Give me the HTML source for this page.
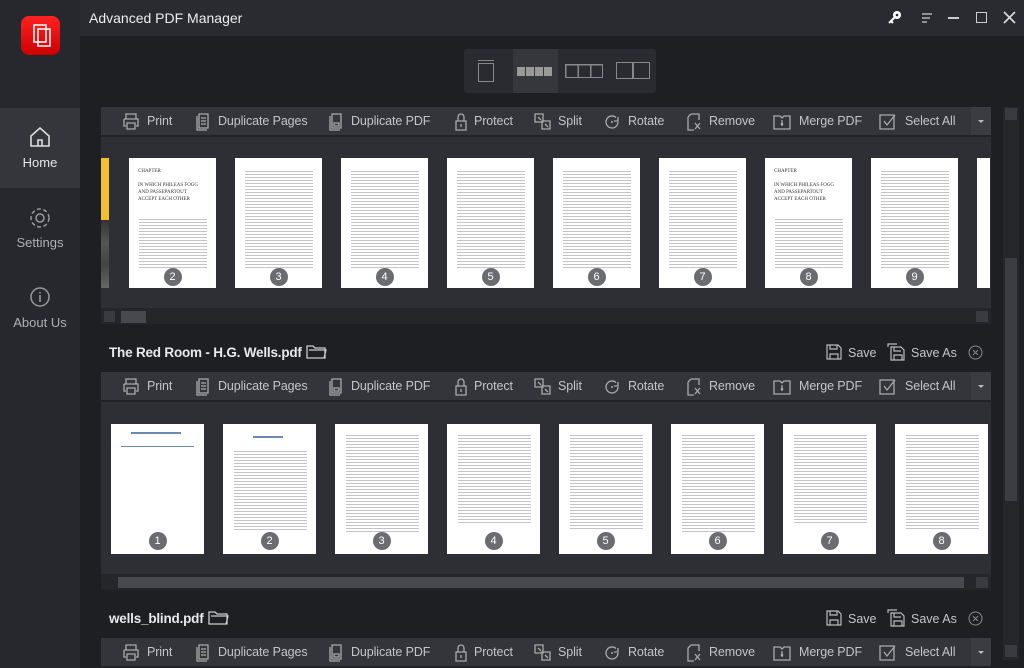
<!DOCTYPE html>
<html><head><meta charset="utf-8"><style>
*{margin:0;padding:0;box-sizing:border-box}
body{width:1024px;height:668px;overflow:hidden;background:#1e1f23;font-family:"Liberation Sans",sans-serif;color:#cfd0d3;position:relative}
.abs{position:absolute}
.side{left:0;top:0;width:80px;height:668px;background:#27282d}
.title{left:80px;top:0;width:944px;height:36px;background:#2a2b30}
.nav{left:0;width:80px;height:80px;text-align:center;font-size:13px;color:#aeb0b4}
.tb{height:30px;background:#34353a;left:101px;width:890px;border-bottom:2px solid #222327}
.tb span{position:absolute;top:7px;font-size:12.5px;color:#c4c5c8;white-space:nowrap;letter-spacing:-0.1px}
.tb svg{position:absolute;top:5px}
.dd{position:absolute;right:0;top:0;width:20px;height:28px;background:#3b3c41}
.area{left:101px;width:890px;background:#2e2f34}
.pg{position:absolute;background:#fff}
.txt{position:absolute;left:12%;right:10%;background:repeating-linear-gradient(#fff 0 1px,#c4c4c4 1px 2px,#fff 2px 3px)}
.num{position:absolute;left:50%;margin-left:-9px;width:18px;height:18px;border-radius:50%;background:#6b6c70;color:#fff;font-size:11px;text-align:center;line-height:18px}
.hs{left:101px;width:890px;height:16px;background:#252629}
.ft{font-size:13.5px;font-weight:bold;color:#e8e9eb;letter-spacing:-0.2px}
.sv{font-size:12.5px;color:#c4c5c8}
#rest .pg{position:absolute}
</style></head><body>
<div class="abs side"></div>
<div class="abs title"></div>
<div class="abs" style="left:21px;top:16px;width:39px;height:39px;border-radius:8px;background:linear-gradient(#f22,#c00)">
<svg width="39" height="39" viewBox="0 0 39 39"><rect x="13" y="9" width="12" height="17" fill="none" stroke="#fff" stroke-width="1.5"/><rect x="17" y="13" width="12" height="17" fill="none" stroke="#fff" stroke-width="1.5"/></svg></div>
<div class="abs" style="left:89px;top:10px;font-size:14px;color:#eee">Advanced PDF Manager</div>
<svg class="abs" style="left:887px;top:9px" width="16" height="16"><circle cx="10" cy="6" r="4" fill="#fff"/><circle cx="10" cy="6" r="1.3" fill="#2a2b30"/><path d="M7.5 8.5L2 14M4 12l2 2" stroke="#fff" stroke-width="2"/></svg>
<svg class="abs" style="left:920px;top:12px" width="14" height="12"><path d="M2 2h10M2 6h8M2 10h5" stroke="#ccc" stroke-width="1.3"/></svg>
<div class="abs" style="left:948px;top:17px;width:11px;height:1.5px;background:#ccc"></div>
<div class="abs" style="left:976px;top:12px;width:11px;height:11px;border:1.5px solid #ccc"></div>
<svg class="abs" style="left:1003px;top:11px" width="13" height="13"><path d="M1 1L12 12M12 1L1 12" stroke="#ddd" stroke-width="1.6"/></svg>

<div class="abs nav" style="top:108px;background:#35363b;color:#e6e6e8"><svg style="margin-top:18px" width="24" height="22" viewBox="0 0 24 22"><path d="M3 10L12 2L21 10V20H3Z M10 20v-6h4v6" fill="none" stroke="#ddd" stroke-width="1.6"/></svg><div style="margin-top:4px">Home</div></div>
<div class="abs nav" style="top:188px"><svg style="margin-top:18px" width="24" height="24" viewBox="0 0 24 24"><circle cx="12" cy="12" r="4" fill="none" stroke="#999" stroke-width="1.5"/><circle cx="12" cy="12" r="9" fill="none" stroke="#999" stroke-width="1.5" stroke-dasharray="4 2.5"/></svg><div style="margin-top:2px">Settings</div></div>
<div class="abs nav" style="top:268px"><svg style="margin-top:18px" width="22" height="22"><circle cx="11" cy="11" r="9" fill="none" stroke="#999" stroke-width="1.5"/><path d="M11 9v7M11 6v1.5" stroke="#999" stroke-width="1.6"/></svg><div style="margin-top:4px">About Us</div></div>

<div class="abs" style="left:464px;top:49px;width:192px;height:44px;background:#2a2b30;border-radius:3px"></div>
<div class="abs" style="left:513px;top:49px;width:45px;height:44px;background:#36373c"></div>
<div class="abs" style="left:478px;top:63px;width:16px;height:19px;border:1.5px solid #888"></div>
<div class="abs" style="left:478px;top:60px;width:16px;height:1px;background:#888"></div>
<div class="abs" style="left:517px;top:67px;width:35px;height:9px;background:repeating-linear-gradient(90deg,#999 0 8px,transparent 8px 9px)"></div>
<div class="abs" style="left:565px;top:64px;width:38px;height:14px;background:repeating-linear-gradient(90deg,#888 0 1.5px,transparent 1.5px 12.5px),linear-gradient(#888,#888) top/100% 1.5px no-repeat,linear-gradient(#888,#888) bottom/100% 1.5px no-repeat;border-right:1.5px solid #888"></div>
<div class="abs" style="left:616px;top:62px;width:34px;height:17px;border:1.5px solid #888;background:linear-gradient(90deg,transparent 15px,#888 15px 17px,transparent 17px)"></div>

<div class="abs" style="left:1003px;top:107px;width:16px;height:553px;background:#26272b"></div>
<div class="abs" style="left:1005px;top:108px;width:12px;height:12px;background:#3a3b40"></div>
<div class="abs" style="left:1005px;top:258px;width:12px;height:243px;background:#3c3d42"></div>
<div class="abs" style="left:1005px;top:645px;width:12px;height:12px;background:#3a3b40"></div>

<div id="t1" class="abs tb" style="top:107px"></div>
<div class="abs area" style="top:137px;height:171px"></div>
<div class="abs" style="left:101px;top:158px;width:8px;height:62px;background:#f0c030"></div>
<div class="abs" style="left:101px;top:220px;width:8px;height:68px;background:linear-gradient(#333,#555,#444,#666)"></div>
<div class="abs hs" style="top:308px"></div>
<div class="abs" style="left:104px;top:311px;width:11px;height:11px;background:#3a3b40"></div>
<div class="abs" style="left:121px;top:311px;width:25px;height:12px;background:#48494e"></div>
<div class="abs" style="left:976px;top:311px;width:12px;height:11px;background:#3a3b40"></div>

<div class="abs ft" style="left:109px;top:345px">The Red Room - H.G. Wells.pdf</div>
<div class="abs ft" style="left:109px;top:611px">wells_blind.pdf</div>

<div id="t2" class="abs tb" style="top:372px"></div>
<div class="abs area" style="top:402px;height:172px"></div>
<div class="abs hs" style="top:574px"></div>
<div class="abs" style="left:118px;top:577px;width:846px;height:11px;background:#48494e"></div>
<div class="abs" style="left:976px;top:577px;width:12px;height:11px;background:#3a3b40"></div>
<div id="t3" class="abs tb" style="top:638px"></div>
<div id="rest"></div>
<script>
var items=[["Print",121,147],["Duplicate Pages",193,218],["Duplicate PDF",326,351],["Protect",451,474],["Split",533,558],["Rotate",602,628],["Remove",684,709],["Merge PDF",772,799],["Select All",878,905]];
var ic={
"Print":'<path d="M5 7V2h10v5M3 7h14v7h-2M5 14H3V7M6 11h8v6H6z" fill="none" stroke="#aaa" stroke-width="1.3"/>',
"Duplicate Pages":'<path d="M4 4v14h10M6 2h9v14H6z M8 6h5M8 9h5M8 12h5" fill="none" stroke="#aaa" stroke-width="1.3"/>',
"Duplicate PDF":'<path d="M4 4v14h10M6 2h9v14H6z M8 11h5v3H8z" fill="none" stroke="#aaa" stroke-width="1.3"/>',
"Protect":'<path d="M5 9h10v9H5zM7 9V5a3 3 0 0 1 6 0v4M10 12v3" fill="none" stroke="#aaa" stroke-width="1.3"/>',
"Split":'<path d="M2 2h8v8H2zM9 9h8v8H9z M5 5l3 3M12 12l3 3" fill="none" stroke="#aaa" stroke-width="1.3"/>',
"Rotate":'<path d="M16 10a6 6 0 1 1-2-4.5M16 5v4h-4" fill="none" stroke="#aaa" stroke-width="1.3"/><circle cx="10" cy="10" r="1" fill="#aaa"/>',
"Remove":'<path d="M7 2h8v6M4 5v13h6M4 5l3-3M11 11l5 6M16 11l-5 6" fill="none" stroke="#aaa" stroke-width="1.3"/>',
"Merge PDF":'<path d="M2 4h6l2 2 2-2h6v13H2z M10 8v6" fill="none" stroke="#aaa" stroke-width="1.3"/><circle cx="10" cy="12" r="1.3" fill="#aaa"/>',
"Select All":'<path d="M2 3h14v14H2z M6 9l3 4 8-10" fill="none" stroke="#aaa" stroke-width="1.3"/>'};
["t1","t2","t3"].forEach(function(id){var h='';items.forEach(function(it){h+='<svg width="20" height="20" viewBox="0 0 20 20" style="left:'+(it[1]-101)+'px">'+ic[it[0]]+'</svg><span style="left:'+(it[2]-101)+'px">'+it[0]+'</span>';});h+='<div class="dd"><svg width="20" height="28" style="top:0"><path d="M7 13h6l-3 3z" fill="#bbb"/></svg></div>';document.getElementById(id).innerHTML=h;});
var r='';
for(var i=0;i<8;i++){var x=129+i*106;var chap=(i==0||i==6);r+='<div class="pg" style="left:'+x+'px;top:158px;width:87px;height:130px">'+(chap?'<div style="position:absolute;left:9px;top:10px;font:5px Liberation Serif;color:#333;line-height:7px">CHAPTER<br><br>IN WHICH PHILEAS FOGG<br>AND PASSEPARTOUT<br>ACCEPT EACH OTHER<br><br></div><div class="txt" style="top:60px;height:50px"></div>':'<div class="txt" style="top:12px;height:98px"></div>')+'<div class="num" style="top:110px">'+(i+2)+'</div></div>';}
r+='<div class="pg" style="left:977px;top:158px;width:13px;height:130px"></div>';
for(var i=0;i<8;i++){var x=111+i*112;r+='<div class="pg" style="left:'+x+'px;top:424px;width:93px;height:130px">'+(i==0?'<div style="position:absolute;left:20px;top:8px;width:50px;height:2px;background:#6a8ab0"></div><div style="position:absolute;left:10px;top:22px;width:73px;height:1px;background:#6a8ab0"></div>':i==1?'<div style="position:absolute;left:30px;top:12px;width:30px;height:2px;background:#6a8ab0"></div><div class="txt" style="top:26px;height:80px"></div>':'<div class="txt" style="top:10px;height:'+(90+(i%3)*5)+'px"></div>')+'<div class="num" style="top:108px">'+(i+1)+'</div></div>';}
function save(y){return '<svg class="abs" style="left:826px;top:'+(y-2)+'px" width="16" height="16"><path d="M1 1h11l3 3v11H1z M4 1v4h7V1M4 15v-5h8v5" fill="none" stroke="#bbb" stroke-width="1.2"/></svg><div class="abs sv" style="left:848px;top:'+y+'px">Save</div><svg class="abs" style="left:887px;top:'+(y-3)+'px" width="18" height="18"><path d="M1 4V1h9M4 4h10l3 3v10H4z M7 4v4h7M7 17v-5h8v5" fill="none" stroke="#bbb" stroke-width="1.2"/></svg><div class="abs sv" style="left:911px;top:'+y+'px">Save As</div><svg class="abs" style="left:968px;top:'+(y-1)+'px" width="15" height="15"><circle cx="7.5" cy="7.5" r="6.5" fill="none" stroke="#888"/><path d="M5 5l5 5M10 5l-5 5" stroke="#888"/></svg>';}
r+=save(346)+save(612);
r+='<svg class="abs" style="left:306px;top:342px" width="22" height="18"><path d="M1 4h6l2 2h10v10H1z M3 8h17l-2 8" fill="none" stroke="#ccc" stroke-width="1.3"/></svg>';
r+='<svg class="abs" style="left:208px;top:608px" width="22" height="18"><path d="M1 4h6l2 2h10v10H1z M3 8h17l-2 8" fill="none" stroke="#ccc" stroke-width="1.3"/></svg>';
document.getElementById('rest').innerHTML=r;
</script>
</body></html>
